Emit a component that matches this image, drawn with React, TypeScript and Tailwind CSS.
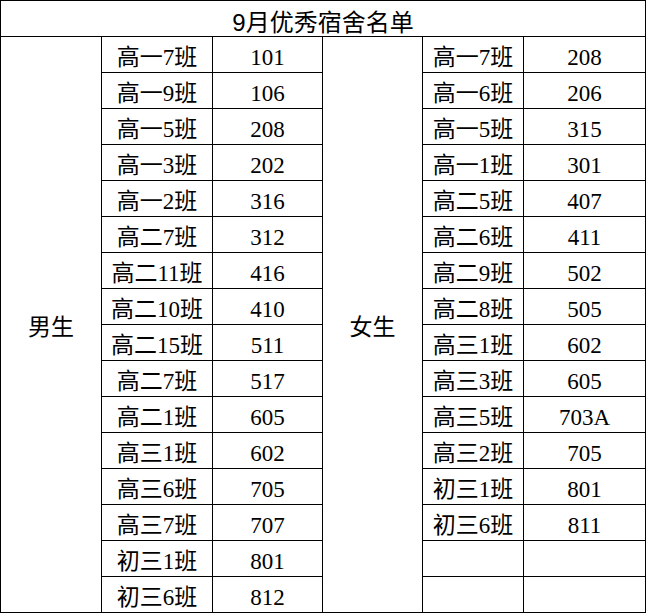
import React from 'react';

const boys: [string, string][] = [
  ['高一7班', '101'],
  ['高一9班', '106'],
  ['高一5班', '208'],
  ['高一3班', '202'],
  ['高一2班', '316'],
  ['高二7班', '312'],
  ['高二11班', '416'],
  ['高二10班', '410'],
  ['高二15班', '511'],
  ['高二7班', '517'],
  ['高二1班', '605'],
  ['高三1班', '602'],
  ['高三6班', '705'],
  ['高三7班', '707'],
  ['初三1班', '801'],
  ['初三6班', '812'],
];

const girls: [string, string][] = [
  ['高一7班', '208'],
  ['高一6班', '206'],
  ['高一5班', '315'],
  ['高一1班', '301'],
  ['高二5班', '407'],
  ['高二6班', '411'],
  ['高二9班', '502'],
  ['高二8班', '505'],
  ['高三1班', '602'],
  ['高三3班', '605'],
  ['高三5班', '703A'],
  ['高三2班', '705'],
  ['初三1班', '801'],
  ['初三6班', '811'],
  ['', ''],
  ['', ''],
];

const Cell: React.FC<{ children?: React.ReactNode; className?: string }> = ({ children, className = '' }) => (
  <div className={`bg-white flex items-center justify-center text-[23px] leading-none text-black ${className}`}>
    {children}
  </div>
);

const App: React.FC = () => {
  return (
    <div className="bg-white min-h-screen font-['Liberation_Serif','Noto_Sans_CJK_SC',serif]">
      <div className="w-[646px] grid grid-cols-[100px_110px_109px_99px_100px_121px] grid-rows-[repeat(17,35px)] gap-px bg-black border border-black">
        <Cell className="col-span-6 pt-[8px] text-[24px] font-['Liberation_Sans','Noto_Sans_CJK_SC',sans-serif]">9月优秀宿舍名单</Cell>
        {boys.map(([cls, room], i) => (
          <React.Fragment key={i}>
            {i === 0 && <Cell className="row-span-16 pt-[6px]">男生</Cell>}
            <Cell className="pt-[6px]">{cls}</Cell>
            <Cell className="pt-[6px]">{room}</Cell>
            {i === 0 && <Cell className="row-span-16 pt-[6px]">女生</Cell>}
            <Cell className="pt-[6px]">{girls[i][0]}</Cell>
            <Cell className="pt-[6px]">{girls[i][1]}</Cell>
          </React.Fragment>
        ))}
      </div>
    </div>
  );
};

export default App;
